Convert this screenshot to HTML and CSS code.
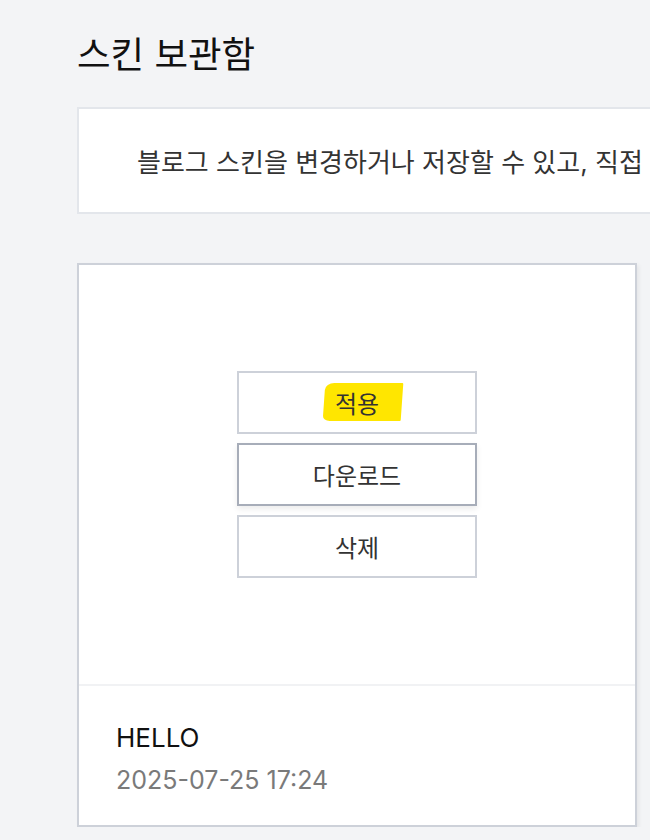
FILE: index.html
```html
<!DOCTYPE html>
<html lang="ko">
<head>
<meta charset="utf-8">
<title>스킨 보관함</title>
<link rel="stylesheet" href="styles.css">
</head>
<body>
<main class="page">
  <h1 class="title">스킨 보관함</h1>
  <div class="notice">
    <p class="notice-text">블로그 스킨을 변경하거나 저장할 수 있고, 직접</p>
  </div>
  <section class="card">
    <div class="preview">
      <div class="actions">
        <button class="btn"><span class="marked">적용</span></button>
        <button class="btn btn-hover">다운로드</button>
        <button class="btn">삭제</button>
      </div>
    </div>
    <div class="info">
      <div class="name">HELLO</div>
      <div class="date">2025-07-25 17:24</div>
    </div>
  </section>
</main>
</body>
</html>
```

FILE: styles.css
```css
html, body {
  margin: 0;
  padding: 0;
  overflow: hidden;
}
body {
  background: #f3f4f6;
  font-family: "Inter", "Noto Sans CJK KR", sans-serif;
  color: #222;
}
.page {
  padding: 30px 0 0 77px;
  width: 760px;
}
.title {
  margin: 0;
  font-size: 36.5px;
  font-weight: 400;
  line-height: 50px;
  color: #111;
}
.notice {
  margin-top: 27px;
  height: 103px;
  background: #fff;
  border: 2px solid #e3e6eb;
  display: flex;
  align-items: center;
  padding-left: 58px;
  white-space: nowrap;
  overflow: hidden;
}
.notice-text {
  margin: 0;
  font-size: 26px;
  color: #333;
}
.card {
  margin-top: 49px;
  width: 556px;
  background: #fff;
  border: 2px solid #cdd1d9;
  box-shadow: 2px 2px 4px rgba(0, 0, 0, 0.06);
}
.preview {
  height: 419px;
  display: flex;
  align-items: center;
  justify-content: center;
  border-bottom: 2px solid #f1f2f4;
}
.actions {
  display: flex;
  flex-direction: column;
  gap: 9px;
}
.btn {
  width: 240px;
  height: 63px;
  background: #fff;
  border: 2px solid #cdd1d9;
  font-family: inherit;
  font-size: 24px;
  color: #333;
  padding: 0;
  cursor: pointer;
}
.btn-hover {
  border-color: #a7adb9;
  box-shadow: 0 3px 6px rgba(0, 0, 0, 0.08);
}
.marked {
  position: relative;
  z-index: 0;
}
.marked::before {
  content: "";
  position: absolute;
  z-index: -1;
  left: -11px;
  right: -23px;
  top: -7px;
  bottom: -2px;
  background: #ffe600;
  border-radius: 9px 1px 1px 7px / 7px 1px 1px 5px;
  transform: skewX(-4deg);
}
.info {
  height: 139px;
  padding-left: 37px;
  display: flex;
  flex-direction: column;
  justify-content: center;
  padding-top: 4px;
  box-sizing: border-box;
}
.name {
  font-size: 26px;
  color: #111;
  line-height: 44px;
}
.date {
  font-size: 25px;
  color: #7a7a7a;
  line-height: 40px;
}
```
